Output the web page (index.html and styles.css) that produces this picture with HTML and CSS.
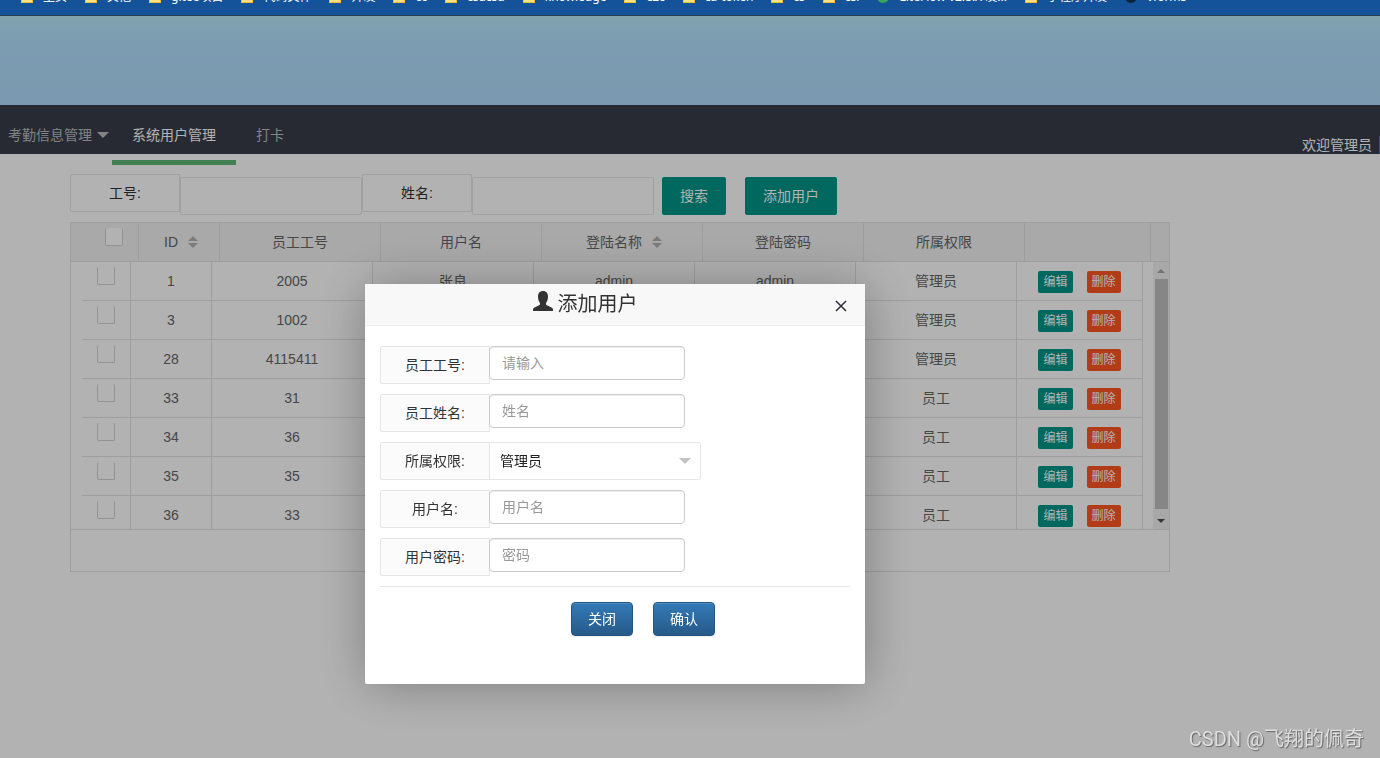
FILE: index.html
```
<!DOCTYPE html>
<html lang="zh">
<head>
    <meta charset="UTF-8">
    <meta name="viewport" content="width=device-width, initial-scale=1.0">
    <title>系统用户管理</title>
    <link rel="stylesheet" href="styles.css">
</head>
<body>
    <div class="bookmarks">
        <ul>
            <li><i class="folder"></i>主页</li>
            <li><i class="folder"></i>其他</li>
            <li><i class="folder"></i>gitee项目</li>
            <li><i class="folder"></i>代码文件</li>
            <li><i class="folder"></i>开发</li>
            <li><i class="folder"></i>cc</li>
            <li><i class="folder"></i>csdcsd</li>
            <li><i class="folder"></i>knowledge</li>
            <li><i class="folder"></i>c2c</li>
            <li><i class="folder"></i>ca-token</li>
            <li><i class="folder"></i>cs</li>
            <li><i class="folder"></i>csl</li>
            <li><i class="dot green"></i>LiteFlow v2.8.X 发...</li>
            <li><i class="folder"></i>小程序开发</li>
            <li><i class="dot dark"></i>vforms</li>
        </ul>
    </div>
    <div class="banner"></div>
    <div class="nav">
        <a href="#" class="more">考勤信息管理</a>
        <a href="#" class="active">系统用户管理</a>
        <a href="#">打卡</a>
        <span class="welcome">欢迎管理员</span>
    </div>

    <div class="container">
        <form class="search">
            <label class="form-label" for="searchNo">工号:</label>
            <input type="text" id="searchNo">
            <label class="form-label" for="searchName">姓名:</label>
            <input type="text" id="searchName">
            <button type="button" class="btn">搜索</button>
            <button type="button" class="btn btn-add">添加用户</button>
        </form>

        <div class="table-view">
            <table class="table-head">
                <colgroup>
                    <col class="col-check-head">
                    <col class="col-id">
                    <col class="col-text" span="5">
                    <col class="col-tool">
                    <col>
                </colgroup>
                <thead>
                    <tr>
                        <th class="check"><input type="checkbox" aria-label="全选"></th>
                        <th class="sortable">ID<svg class="sort" viewBox="0 0 10 12"><path d="M5 0l5 5H0zM5 12l5-5H0z"/></svg></th>
                        <th>员工工号</th>
                        <th>用户名</th>
                        <th class="sortable">登陆名称<svg class="sort" viewBox="0 0 10 12"><path d="M5 0l5 5H0zM5 12l5-5H0z"/></svg></th>
                        <th>登陆密码</th>
                        <th>所属权限</th>
                        <th></th>
                        <th></th>
                    </tr>
                </thead>
            </table>
            <div class="table-body">
                <table>
                    <colgroup>
                        <col class="col-check">
                        <col class="col-id">
                        <col class="col-text" span="5">
                        <col class="col-tool">
                    </colgroup>
                    <tbody>
                        <tr>
                            <td class="check"><input type="checkbox" aria-label="选择 1"></td>
                            <td>1</td><td>2005</td><td>张良</td><td>admin</td><td>admin</td><td>管理员</td>
                            <td><button class="btn-xs">编辑</button><button class="btn-xs danger">删除</button></td>
                        </tr>
                        <tr>
                            <td class="check"><input type="checkbox" aria-label="选择 3"></td>
                            <td>3</td><td>1002</td><td></td><td></td><td></td><td>管理员</td>
                            <td><button class="btn-xs">编辑</button><button class="btn-xs danger">删除</button></td>
                        </tr>
                        <tr>
                            <td class="check"><input type="checkbox" aria-label="选择 28"></td>
                            <td>28</td><td>4115411</td><td></td><td></td><td></td><td>管理员</td>
                            <td><button class="btn-xs">编辑</button><button class="btn-xs danger">删除</button></td>
                        </tr>
                        <tr>
                            <td class="check"><input type="checkbox" aria-label="选择 33"></td>
                            <td>33</td><td>31</td><td></td><td></td><td></td><td>员工</td>
                            <td><button class="btn-xs">编辑</button><button class="btn-xs danger">删除</button></td>
                        </tr>
                        <tr>
                            <td class="check"><input type="checkbox" aria-label="选择 34"></td>
                            <td>34</td><td>36</td><td></td><td></td><td></td><td>员工</td>
                            <td><button class="btn-xs">编辑</button><button class="btn-xs danger">删除</button></td>
                        </tr>
                        <tr>
                            <td class="check"><input type="checkbox" aria-label="选择 35"></td>
                            <td>35</td><td>35</td><td></td><td></td><td></td><td>员工</td>
                            <td><button class="btn-xs">编辑</button><button class="btn-xs danger">删除</button></td>
                        </tr>
                        <tr>
                            <td class="check"><input type="checkbox" aria-label="选择 36"></td>
                            <td>36</td><td>33</td><td></td><td></td><td></td><td>员工</td>
                            <td><button class="btn-xs">编辑</button><button class="btn-xs danger">删除</button></td>
                        </tr>
                    </tbody>
                </table>
                <div class="scrollbar">
                    <svg class="arrow up" viewBox="0 0 8 4"><path d="M4 0l4 4H0z"/></svg>
                    <div class="thumb"></div>
                    <svg class="arrow" viewBox="0 0 8 4"><path d="M0 0h8L4 4z"/></svg>
                </div>
            </div>
            <div class="table-page"></div>
        </div>
    </div>

    <!-- 弹出层 -->
    <div class="shade"></div>
    <div class="modal" role="dialog" aria-labelledby="modalTitle">
        <div class="modal-header">
            <h4 id="modalTitle"><svg class="user" viewBox="0 0 20 20"><path d="M10 0c3.200 0 5 2.200 5 5.500 0 2.600-.8 5-2 6.500v1c0 .6.300 1 .9 1.300l4.600 2.300c1 .5 1.500 1.200 1.500 2.200V20H0v-1.200c0-1 .5-1.700 1.500-2.200l4.600-2.300c.6-.3.900-.7.900-1.300v-1C5.800 10.500 5 8.100 5 5.500 5 2.200 6.800 0 10 0z"/></svg>添加用户</h4>
            <button class="close" aria-label="关闭窗口"><svg viewBox="0 0 12 12"><path d="M1 1l10 10M11 1L1 11"/></svg></button>
        </div>
        <form class="modal-body">
            <div class="form-group">
                <label class="form-label" for="empNo">员工工号:</label>
                <input type="text" id="empNo" placeholder="请输入">
            </div>
            <div class="form-group">
                <label class="form-label" for="empName">员工姓名:</label>
                <input type="text" id="empName" placeholder="姓名">
            </div>
            <div class="form-group">
                <label class="form-label" for="role">所属权限:</label>
                <div class="select">
                    <select id="role">
                        <option>管理员</option>
                        <option>员工</option>
                    </select>
                </div>
            </div>
            <div class="form-group">
                <label class="form-label" for="userName">用户名:</label>
                <input type="text" id="userName" placeholder="用户名">
            </div>
            <div class="form-group">
                <label class="form-label" for="userPwd">用户密码:</label>
                <input type="text" id="userPwd" placeholder="密码">
            </div>
            <hr>
            <div class="modal-footer">
                <button type="button" class="btn-primary">关闭</button>
                <button type="button" class="btn-primary">确认</button>
            </div>
        </form>
    </div>

    <div class="watermark">CSDN @飞翔的佩奇</div>
</body>
</html>
```
FILE: styles.css
```
* {
    box-sizing: border-box;
}
body {
    font-family: "Liberation Sans", "Noto Sans CJK SC", sans-serif;
    font-size: 14px;
    color: #333;
    background-color: #fff;
    margin: 0;
    min-height: 100vh;
    overflow: hidden;
}
button, input, select {
    font-family: inherit;
    font-size: 14px;
}
button {
    cursor: pointer;
}

/* 书签栏 */
.bookmarks {
    position: relative;
    z-index: 20;
    display: flex;
    align-items: flex-end;
    height: 15px;
    overflow: hidden;
    background-color: #14539a;
    color: #fff;
    font-family: "Noto Sans", "Noto Sans CJK SC", sans-serif;
    font-size: 12px;
}
.bookmarks ul {
    display: flex;
    gap: 18px;
    margin: 0;
    padding: 0 0 9px 21px;
    list-style: none;
    white-space: nowrap;
}
.bookmarks li {
    display: flex;
    align-items: center;
    gap: 10px;
    line-height: 18px;
}
.folder {
    width: 12px;
    height: 12px;
    background-color: #ffe082;
    border: 1px solid #f0c030;
}
.dot {
    width: 12px;
    height: 12px;
    border-radius: 50%;
}
.green {
    background-color: #34a853;
}
.dark {
    background-color: #0b2440;
}

.banner {
    height: 90px;
    border-top: 1px solid #305870;
    background: linear-gradient(#b8e8f8, #b2e0ff 30%, #b0dcfc);
}

.nav {
    display: flex;
    height: 49px;
    padding-left: 108px;
    background-color: #393d49;
}
.nav a {
    position: relative;
    height: 60px;
    padding: 0 20px;
    line-height: 60px;
    color: #bbbcc0;
    text-decoration: none;
    white-space: nowrap;
}
.nav .more {
    margin-left: -120px;
}
.nav .more::after {
    content: "";
    position: absolute;
    top: 27px;
    right: 3px;
    border: 6px solid transparent;
    border-top-color: #bbbcc0;
    border-bottom: 0;
}
.nav .active {
    color: #fff;
}
.nav .active::after {
    content: "";
    position: absolute;
    left: 0;
    right: 0;
    bottom: 0;
    height: 5px;
    background-color: #5fb878;
}
.welcome {
    align-self: flex-end;
    margin-left: auto;
    padding-right: 7px;
    border-right: 1px solid #337ab7;
    line-height: 18px;
    color: #fff;
}

.container {
    max-width: 1170px;
    padding: 20px 0 0 70px;
}
.form-label {
    flex: none;
    width: 110px;
    height: 38px;
    border: 1px solid #e6e6e6;
    border-radius: 2px 0 0 2px;
    background-color: #fbfbfb;
    line-height: 36px;
    text-align: center;
}
.search {
    display: flex;
    align-items: flex-start;
    margin-bottom: 7px;
}
.search .form-label {
    background-color: #fff;
}
.search input {
    width: 182px;
    height: 38px;
    margin-top: 3px;
    padding: 0 10px;
    border: 1px solid #e6e6e6;
    border-radius: 2px;
    background-color: #fff;
}
.btn {
    height: 38px;
    margin: 3px 0 0 8px;
    padding: 0 18px 2px;
    border: none;
    border-radius: 2px;
    background-color: #009688;
    color: #fff;
}
.btn-add {
    margin-left: 19px;
}

/* 数据表格 */
.table-view {
    border: 1px solid #e2e2e2;
    color: #666;
}
table {
    border-collapse: separate;
    border-spacing: 0;
    table-layout: fixed;
}
th, td {
    height: 39px;
    padding: 0;
    border-right: 1px solid #e2e2e2;
    border-bottom: 1px solid #e2e2e2;
    font-weight: normal;
    line-height: 20px;
    text-align: center;
}
.table-head {
    width: 100%;
    background-color: #f2f2f2;
}
.table-head th:last-child {
    border-right: none;
}
.col-check-head {
    width: 68px;
}
.col-check {
    width: 49px;
}
.col-id {
    width: 81px;
}
.col-text {
    width: 161px;
}
.col-tool {
    width: 126px;
}
.check {
    vertical-align: top;
}
th.check {
    padding-left: 18px;
}
.sortable {
    padding-left: 4px;
}
.check input {
    appearance: none;
    display: block;
    width: 18px;
    height: 18px;
    margin: 5px auto 0;
    border: 1px solid #d2d2d2;
    border-top: none;
    border-radius: 2px;
    background-color: #fff;
}
.sort {
    width: 10px;
    height: 12px;
    margin-left: 10px;
    vertical-align: -1px;
    fill: #b2b2b2;
}
.table-body {
    display: flex;
    justify-content: space-between;
    height: 267px;
    padding-left: 11px;
    overflow: hidden;
}
.table-body table {
    width: 1061px;
    height: 273px;
}
.btn-xs {
    height: 22px;
    margin-top: 2px;
    padding: 0 5px;
    border: none;
    border-radius: 2px;
    background-color: #009688;
    color: #fff;
    font-size: 12px;
    line-height: 22px;
}
.danger {
    margin-left: 14px;
    background-color: #ff5722;
}
.scrollbar {
    display: flex;
    flex-direction: column;
    align-items: center;
    justify-content: space-between;
    width: 16px;
    padding: 7px 0 6px;
    background-color: #f1f1f1;
}
.thumb {
    width: 13px;
    height: 230px;
    margin-bottom: 4px;
    background-color: #c1c1c1;
}
.arrow {
    width: 8px;
    height: 4px;
    fill: #505050;
}
.up {
    fill: #a3a3a3;
}
.table-page {
    height: 42px;
    border-top: 1px solid #e2e2e2;
}

/* 弹出层 */
.shade {
    position: fixed;
    inset: 0;
    z-index: 10;
    background-color: rgba(0, 0, 0, 0.3);
}
.modal {
    position: fixed;
    top: 284px;
    left: 365px;
    z-index: 11;
    width: 500px;
    min-height: 400px;
    border-radius: 2px;
    background-color: #fff;
    box-shadow: 1px 1px 50px rgba(0, 0, 0, 0.3);
}
.modal-header {
    position: relative;
    height: 42px;
    padding: 0 80px 0 20px;
    border-bottom: 1px solid #eee;
    background-color: #f8f8f8;
}
.modal-header h4 {
    display: flex;
    align-items: center;
    justify-content: center;
    gap: 5px;
    margin: 0;
    font-size: 20px;
    font-weight: normal;
    line-height: 40px;
}
.user {
    width: 20px;
    height: 20px;
    margin-bottom: 6px;
    fill: #333;
}
.close {
    position: absolute;
    top: 16px;
    right: 18px;
    padding: 0;
    border: none;
    background: none;
}
.close svg {
    display: block;
    width: 12px;
    height: 12px;
    fill: none;
    stroke: #2e2d3c;
    stroke-width: 1.5;
}
.modal-body {
    padding: 20px 15px;
}
.form-group {
    display: flex;
    align-items: flex-start;
    margin-bottom: 10px;
}
.form-group input {
    width: 196px;
    height: 34px;
    margin-left: -1px;
    padding: 6px 12px;
    border: 1px solid #ccc;
    border-radius: 4px;
    box-shadow: inset 0 1px 1px rgba(0, 0, 0, 0.075);
}
.form-group input::placeholder {
    color: #999;
}
.select {
    position: relative;
    width: 212px;
    margin-left: -1px;
}
.select select {
    appearance: none;
    width: 100%;
    height: 38px;
    padding: 0 10px;
    border: 1px solid #e6e6e6;
    border-radius: 0 2px 2px 0;
    background-color: #fff;
    color: #222;
}
.select::after {
    content: "";
    position: absolute;
    top: 16px;
    right: 10px;
    border: 6px solid transparent;
    border-top-color: #c2c2c2;
    border-bottom: 0;
}
hr {
    margin: 0 0 15px;
    border: 0;
    border-top: 1px solid #e6e6e6;
}
.modal-footer {
    display: flex;
    justify-content: center;
    gap: 20px;
    padding-left: 56px;
}
.btn-primary {
    height: 34px;
    padding: 0 16px 2px;
    border: 1px solid #245580;
    border-radius: 4px;
    background: linear-gradient(#337ab7, #265a88);
    box-shadow: inset 0 1px 0 rgba(255, 255, 255, 0.15), 0 1px 1px rgba(0, 0, 0, 0.075);
    color: #fff;
}

.watermark {
    position: fixed;
    right: 16px;
    bottom: 5px;
    z-index: 12;
    font-family: Roboto, "Noto Sans CJK SC", sans-serif;
    font-size: 20px;
    line-height: 28px;
    color: #dedede;
    text-shadow: 1px 1px 1px #666;
}
```
